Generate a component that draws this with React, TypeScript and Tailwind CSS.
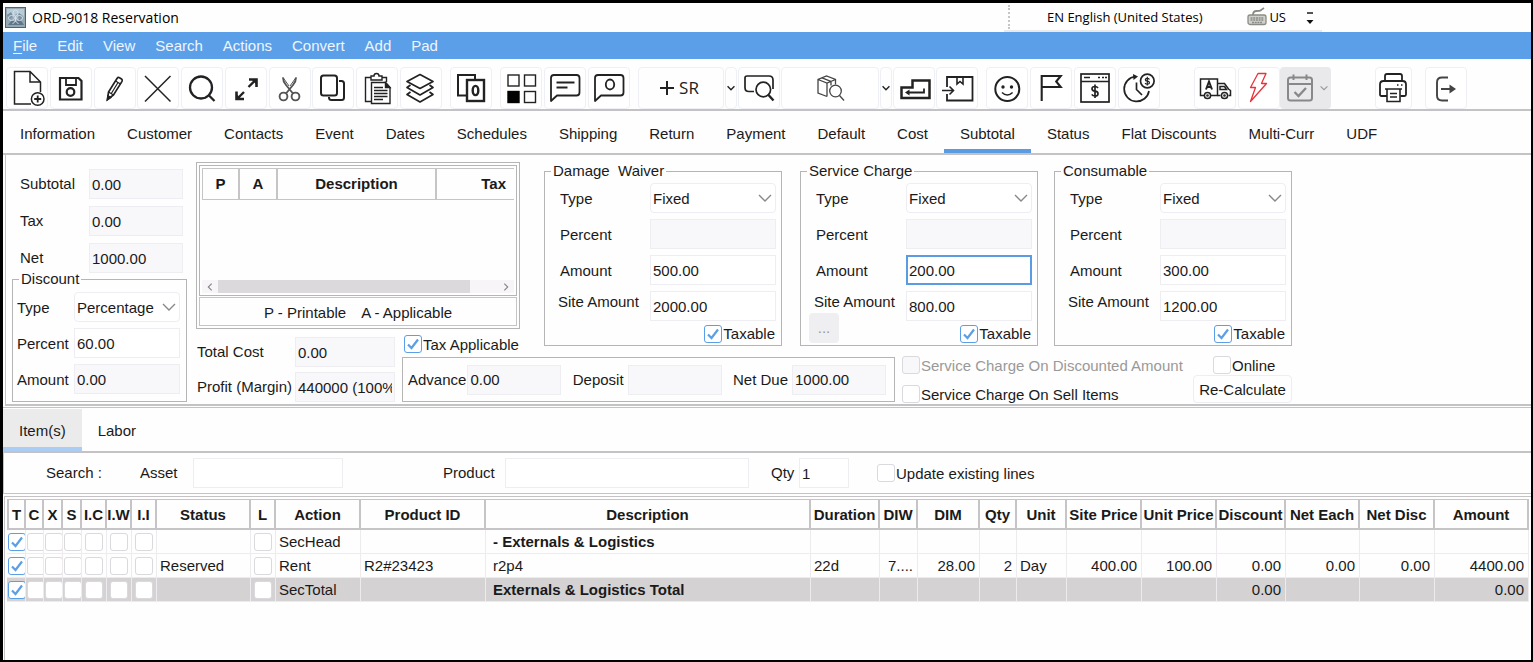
import { useState } from "react";
import type { ReactNode } from "react";

const menuItems = ["Edit", "View", "Search", "Actions", "Convert", "Add", "Pad"];

const mainTabs = [
    "Information", "Customer", "Contacts", "Event", "Dates", "Schedules", "Shipping", "Return",
    "Payment", "Default", "Cost", "Subtotal", "Status", "Flat Discounts", "Multi-Curr", "UDF",
];

interface Column {
    label: string;
    width?: number;
    align?: "left" | "right";
}

// The description column has no width and takes what is left
const columns: Column[] = [
    { label: "Status", width: 94 },
    { label: "L", width: 25 },
    { label: "Action", width: 85 },
    { label: "Product ID", width: 125 },
    { label: "Description" },
    { label: "Duration", width: 69 },
    { label: "DIW", width: 38, align: "right" },
    { label: "DIM", width: 62, align: "right" },
    { label: "Qty", width: 37, align: "right" },
    { label: "Unit", width: 50 },
    { label: "Site Price", width: 75, align: "right" },
    { label: "Unit Price", width: 75, align: "right" },
    { label: "Discount", width: 69, align: "right" },
    { label: "Net Each", width: 74, align: "right" },
    { label: "Net Disc", width: 75, align: "right" },
    { label: "Amount", width: 94, align: "right" },
];

const flagColumns = [
    { label: "T", width: 19 },
    { label: "C", width: 18 },
    { label: "X", width: 19 },
    { label: "S", width: 19 },
    { label: "I.C", width: 25 },
    { label: "I.W", width: 25 },
    { label: "I.I", width: 25 },
];

const rows = [
    { kind: "head", cells: { Action: "SecHead", Description: "- Externals & Logistics" } },
    {
        kind: "item",
        cells: {
            Status: "Reserved", Action: "Rent", "Product ID": "R2#23423", Description: "r2p4", Duration: "22d",
            DIW: "7....", DIM: "28.00", Qty: "2", Unit: "Day", "Site Price": "400.00", "Unit Price": "100.00",
            Discount: "0.00", "Net Each": "0.00", "Net Disc": "0.00", Amount: "4400.00",
        },
    },
    { kind: "total", cells: { Action: "SecTotal", Description: "Externals & Logistics Total", Discount: "0.00", Amount: "0.00" } },
] as { kind: string; cells: Record<string, string> }[];

/* ---------- icons ---------- */

function Icon({ children, stroke = 1.5, className = "text-[#222]" }: { children: ReactNode; stroke?: number; className?: string }) {
    return (
        <svg width="42" height="42" viewBox="0 0 42 42" fill="none" stroke="currentColor" strokeWidth={stroke} className={`shrink-0 ${className}`} aria-hidden="true">
            {children}
        </svg>
    );
}

const NewIcon = () => (
    <Icon>
        <path d="M25 37H8.5V4.5H24L34.5 15V25M24 4.5V15H34.5" />
        <circle cx="31.7" cy="32" r="6.3" />
        <path d="M31.7 28.5v7M28.2 32h7" strokeWidth={1.8} />
    </Icon>
);

const SaveIcon = () => (
    <Icon stroke={2.2}>
        <path d="M10 11h18.5l3 3v18.5H10z" />
        <path d="M16 11v7h10v-7" strokeWidth={1.8} />
        <circle cx="20.5" cy="25" r="3.8" />
    </Icon>
);

const PencilIcon = () => (
    <Icon stroke={1.7}>
        <path d="M13.5 32.5l1-7.5L23 11.500q1-1.500 2.500-.8l2 1.200q1.300 1 .5 2.500L19.500 28z" />
        <path d="M14.500 25l5 3M21.500 14l5.500 3.200M24 15.500L17 27" strokeWidth={1.2} />
        <path d="M13.500 32.500l.5-3.500 2.500 1.500z" fill="currentColor" />
    </Icon>
);

const CrossIcon = () => (
    <Icon>
        <path d="M8 9l25.500 25.500M33.500 9L8 34.500" />
    </Icon>
);

const SearchIcon = () => (
    <Icon stroke={2.3}>
        <circle cx="20" cy="20.5" r="11" />
        <path d="M28 28.5l5.500 5.500" />
    </Icon>
);

const ExpandIcon = () => (
    <Icon stroke={2.4}>
        <path d="M23.500 20l7-7M19 25l-7 7" />
        <path d="M24 12.500h7.500V20M11.500 24.500V32H19" strokeWidth={2.6} />
        <path d="M26.500 12.500h5V17.500zM11.500 27v5h5z" fill="currentColor" stroke="none" />
    </Icon>
);

const ScissorsIcon = () => (
    <Icon stroke={1.9} className="text-[#555]">
        <circle cx="14.5" cy="29.5" r="3.900" />
        <circle cx="26.5" cy="29.5" r="3.900" />
        <path d="M14 10.500q0 4 3 7.500l7 8.500M27 10.500q0 4-3 7.500l-7 8.500" />
        <path d="M14 10.500l6 8.500M27 10.500l-6 8.500" strokeWidth={1} />
    </Icon>
);

const CopyIcon = () => (
    <Icon stroke={2}>
        <path d="M27 14h2.500q2.500 0 2.500 2.500v14q0 2.500-2.500 2.500H19.500q-2.500 0-2.500-2.500V30" />
        <rect x="9" y="8.5" width="16" height="20" rx="2.5" />
    </Icon>
);

const PasteIcon = () => (
    <Icon stroke={1.4}>
        <path d="M15 34.500H9.500V10.500H15M26 10.500h4.500V15" />
        <path d="M15 9h3q0-2.500 2.500-2.500T23 9h3v4H15z" />
        <path d="M15.500 15.500h14l4.500 5v16H15.500z" />
        <path d="M29.500 15.500v5H34z" fill="currentColor" />
        <path d="M18 20.500h9M18 23.500h13.500M18 26.500h13.500M18 29.500h13.500M18 32.500h9" />
    </Icon>
);

const LayersIcon = () => (
    <Icon stroke={1.7}>
        <path d="M20 7.500l13 7-13 7-13-7z" strokeLinejoin="round" />
        <path d="M10.500 18L7 20.500l13 7.500 13-7.500-3.500-2.500" strokeLinejoin="round" />
        <path d="M10.500 25L7 27.500l13 7.500 13-7.500-3.500-2.500" strokeLinejoin="round" />
    </Icon>
);

const CopyZeroIcon = () => (
    <Icon stroke={2.4}>
        <path d="M16 28.500H8V8h17v4" strokeWidth={2} />
        <rect x="17" y="13" width="17" height="21" />
        <ellipse cx="25.5" cy="23.5" rx="2.8" ry="4.6" />
    </Icon>
);

const SquaresIcon = () => (
    <Icon stroke={1.4}>
        <rect x="8" y="8" width="11" height="11" />
        <rect x="24.5" y="8" width="11" height="11" />
        <rect x="8" y="24.5" width="11" height="11" fill="currentColor" className="text-black" />
        <rect x="24.5" y="24.5" width="11" height="11" />
    </Icon>
);

const BUBBLE = "M10 8h22.500q3 0 3 3v14.500q0 3-3 3H13L7 34V11q0-3 3-3z";

const MessageIcon = () => (
    <Icon stroke={1.8}>
        <path d={BUBBLE} strokeLinejoin="round" />
        <path d="M12.500 15.500h18M12.500 20.500h11" />
    </Icon>
);

const MessageZeroIcon = () => (
    <Icon stroke={1.8}>
        <path d={BUBBLE} strokeLinejoin="round" />
        <ellipse cx="22" cy="17.5" rx="4.2" ry="5" />
    </Icon>
);

const ScreenSearchIcon = () => (
    <Icon stroke={1.7}>
        <path d="M16 24.500H11q-4 0-4-4V11q0-2 2-2h22q4 0 4 4v9" />
        <circle cx="25.3" cy="22.5" r="7.3" />
        <path d="M30.500 28l5 5.500" strokeWidth={2.4} />
    </Icon>
);

const BoxSearchIcon = () => (
    <Icon stroke={1.3} className="text-[#444]">
        <path d="M18 29.500l-9-3.500V12.500l8.500-3.500 9 3.500v5M9 12.500l9 3.500 8.500-3.500M18 16v13.500M13 10.800l9 3.700v4" />
        <circle cx="26.5" cy="24" r="5.800" />
        <path d="M30.500 28.500l4.500 5" />
    </Icon>
);

const ReturnIcon = () => (
    <Icon stroke={2.5}>
        <path d="M8.500 31V20.500h11V13.500h17V31z" />
        <path d="M31 21.500v4H14" strokeWidth={1.800} />
        <path d="M16.500 22.500v6l-4.500-3z" fill="currentColor" stroke="none" />
    </Icon>
);

const ImportBoxIcon = () => (
    <Icon stroke={1.8}>
        <path d="M11 20V10h25.500v23.500H11V27" />
        <path d="M21 10v7l3-2.500 3 2.500v-7" strokeWidth={1.6} />
        <path d="M6 23.500h11M13.500 19.500l4 4-4 4" strokeWidth={1.6} />
    </Icon>
);

const SmileyIcon = () => (
    <Icon stroke={2}>
        <circle cx="21.3" cy="22" r="12" />
        <circle cx="17" cy="20" r="1.700" fill="currentColor" stroke="none" />
        <circle cx="25.5" cy="20" r="1.700" fill="currentColor" stroke="none" />
        <path d="M16 25.500q5.300 5 10.600 0" strokeWidth={1.6} />
    </Icon>
);

const FlagIcon = () => (
    <Icon stroke={2.1}>
        <path d="M11.700 34V9h19l-4.500 5.500 4.500 5.500h-19" />
    </Icon>
);

const BrowserIcon = () => (
    <Icon stroke={1.7}>
        <rect x="7" y="7" width="28" height="28" />
        <path d="M7 14.500h28" />
        <path d="M10 10.500h6M24 10.500h2M28 10.500h2M31 10.500h2" />
        <path d="M24 21q-1-1.500-3-1.500-3 0-3 2.200t3 2.400 3 2.600-3 2.300q-2.300 0-3.200-1.700M21 17.500v13.500" />
    </Icon>
);

const ClockIcon = () => (
    <Icon stroke={1.7}>
        <path d="M17.500 9.500A12.500 12.500 0 1 0 31 24" />
        <path d="M15 7l5 2.500-4.500 3.500z" fill="currentColor" stroke="none" />
        <path d="M18.500 15.500v7l5.500 5.500" />
        <circle cx="29.3" cy="14" r="6.800" />
        <path d="M31.500 12.500q-.8-1.200-2.200-1.200-2 0-2 1.400t2 1.400 2.100 1.500-2.100 1.500q-1.600 0-2.200-1.200M29.300 9.800v8.600" strokeWidth={1.2} />
    </Icon>
);

const TruckIcon = () => (
    <Icon stroke={1.5}>
        <path d="M10 28.500H6.500V12h17v16.500H17" />
        <path d="M23.500 16.500h7l4 5.500 2 1.500v5h-2M26.500 28.500h-3M26 19.500h4.500l2 3H26z" />
        <circle cx="13.5" cy="28.5" r="3.100" />
        <circle cx="30.5" cy="28.5" r="3.100" />
        <circle cx="13.5" cy="28.5" r=".6" />
        <circle cx="30.5" cy="28.5" r=".6" />
        <path d="M12 22.500l3-8 3 8M13 20h4" strokeWidth={2} />
    </Icon>
);

const BoltIcon = () => (
    <Icon stroke={1.3} className="text-[#e8343c]">
        <path d="M20 6.500h8l-4.500 10h5L12.500 34.500l5-14h-5z" strokeLinejoin="round" />
    </Icon>
);

const CalendarIcon = () => (
    <Icon stroke={2} className="text-[#888]">
        <rect x="8" y="10.5" width="24" height="23" rx="2.5" />
        <path d="M8 17h24M13.500 7.500v5.500M26.500 7.500v5.500" />
        <path d="M14.500 25l4 4 7.500-8" strokeWidth={2.3} />
    </Icon>
);

const PrinterIcon = () => (
    <Icon stroke={1.8}>
        <path d="M12 14V9q0-2 2-2h13q2 0 2 2v5" />
        <path d="M14 29H8.500Q7 29 7 27.500v-10Q7 14 10.500 14h19q3.500 0 3.500 3.500v10q0 1.500-1.500 1.500H27.500" />
        <path d="M12 22h17M14 22v12.500h13V22M17 26.500h7M17 30h7M24 18h1.500M28 18h1.500" strokeWidth={1.6} />
    </Icon>
);

const ExitIcon = () => (
    <Icon stroke={1.9} className="text-[#444]">
        <path d="M23 10.500h-6q-5 0-5 5v13q0 5 5 5h6M16 22h10" />
        <path d="M24.500 17.500l6.500 4.500-6.500 4.500z" fill="currentColor" stroke="none" />
    </Icon>
);

const Chevron = ({ size = 14, stroke = 1.4, className = "" }: { size?: number; stroke?: number; className?: string }) => (
    <svg width={size} height={size} viewBox="0 0 14 14" fill="none" stroke="currentColor" strokeWidth={stroke} className={className} aria-hidden="true">
        <path d="M1 4l6 6 6-6" />
    </svg>
);

/* ---------- controls ---------- */

function ToolButton({ label, children, width = "w-[42px]" }: { label: string; children: ReactNode; width?: string }) {
    return (
        <button aria-label={label} className={`h-[42px] ${width} shrink-0 flex items-center justify-center rounded border border-[#eef0f5] bg-white overflow-hidden hover:bg-[#f1f6fd]`}>
            {children}
        </button>
    );
}

function DropButton({ label }: { label: string }) {
    return (
        <button aria-label={label} className="h-[42px] w-3 shrink-0 flex items-center justify-center rounded border border-[#eef0f5] text-[#222]">
            <Chevron size={8} stroke={2.4} className="shrink-0" />
        </button>
    );
}

function CheckBox({ id, label, checked = false, disabled = false }: { id?: string; label?: string; checked?: boolean; disabled?: boolean }) {
    return (
        <span className="relative block size-[18px] shrink-0">
            <input
                type="checkbox"
                id={id}
                aria-label={label}
                defaultChecked={checked}
                disabled={disabled}
                className="peer block size-[18px] appearance-none rounded-[3px] border border-[#d9d9de] bg-white checked:border-[#5b9fe6] disabled:bg-[#f8f7fa]"
            />
            <svg width="18" height="18" viewBox="0 0 18 18" fill="none" stroke="#5b9fe6" strokeWidth="2.2" className="absolute inset-0 hidden peer-checked:block pointer-events-none">
                <path d="M4 9.500l3.500 3.500L14 4.500" />
            </svg>
        </span>
    );
}

function TextBox({ id, value = "", width = "w-[126px]", readOnly = false, active = false }: { id: string; value?: string; width?: string; readOnly?: boolean; active?: boolean }) {
    return (
        <input
            id={id}
            type="text"
            defaultValue={value}
            readOnly={readOnly}
            className={`h-[30px] shrink-0 outline-none ${width} ${active ? "border-2 border-[#5b9be2] px-px" : "border border-[#eeedf2] px-0.5"} ${readOnly ? "bg-[#f8f7fa]" : "bg-white"}`}
        />
    );
}

function SelectBox({ id, value, width = "w-[126px]" }: { id: string; value: string; width?: string }) {
    return (
        <span className={`relative shrink-0 ${width}`}>
            <select id={id} defaultValue={value} className="block h-[30px] w-full appearance-none rounded border border-[#eeedf2] bg-white pt-px pl-0.5 outline-none">
                <option>Fixed</option>
                <option>Percentage</option>
            </select>
            <Chevron className="absolute right-1 top-2 text-[#888] pointer-events-none" />
        </span>
    );
}

interface ChargeGroupProps {
    id: string;
    title: string;
    amount: string;
    siteAmount: string;
    active?: boolean;
    more?: boolean;
    className: string;
}

function ChargeGroup({ id, title, amount, siteAmount, active, more, className }: ChargeGroupProps) {
    return (
        <fieldset className={`w-[238px] self-start border border-[#b5b5b5] pt-[3px] pb-0.5 pr-[5px] pl-2 ${className}`}>
            <legend className="-ml-0.5 px-0.5 leading-[18px] whitespace-pre">{title}</legend>
            <div className="flex flex-col gap-1.5">
                <div className="flex items-center justify-between pl-[7px]">
                    <label htmlFor={`${id}-type`} className="pt-0.5">Type</label>
                    <SelectBox id={`${id}-type`} value="Fixed" />
                </div>
                <div className="flex items-center justify-between pl-[7px]">
                    <label htmlFor={`${id}-percent`} className="pt-0.5">Percent</label>
                    <TextBox id={`${id}-percent`} readOnly />
                </div>
                <div className="flex items-center justify-between pl-[7px]">
                    <label htmlFor={`${id}-amount`} className="pt-0.5">Amount</label>
                    <TextBox id={`${id}-amount`} value={amount} active={active} />
                </div>
                <div className="flex items-start justify-between pl-[5px]">
                    <label htmlFor={`${id}-site`} className="pt-0.5">Site Amount</label>
                    <TextBox id={`${id}-site`} value={siteAmount} />
                </div>
            </div>
            <div className="mt-0.5 flex h-5 items-end">
                {more && <button className="size-[30px] rounded-sm bg-[#efeef1] text-[#999]">...</button>}
                <div className="ml-auto flex items-center">
                    <CheckBox id={`${id}-taxable`} checked />
                    <label htmlFor={`${id}-taxable`} className="pl-px pr-px">Taxable</label>
                </div>
            </div>
        </fieldset>
    );
}

/* ---------- page sections ---------- */

function TitleBar() {
    return (
        <header className="flex h-[29px] items-center pl-0.5 text-black">
            <svg width="21" height="21" viewBox="0 0 21 21" className="shrink-0" aria-hidden="true">
                <rect x=".5" y=".5" width="20" height="20" fill="#93a7b5" stroke="#5a6066" />
                <path d="M2 2h17v8l-6-4-5 3-6-2z" fill="#b9cbd6" />
                <path d="M3 18l4-5 3 2 5-3 4 6z" fill="#5f7687" />
                <path d="M2 8l4-3 2 4-4 4zM14 6l4 3-2 4-3-3z" fill="#7990a0" />
                <g fill="none" stroke="#d3e0e8">
                    <ellipse cx="10.5" cy="6" rx="2.500" ry="3" />
                    <ellipse cx="6.5" cy="11" rx="3" ry="2.500" />
                    <ellipse cx="14.5" cy="11" rx="3" ry="2.500" />
                    <path d="M10.500 9v5l-3 3M10.500 14l3 3" />
                </g>
            </svg>
            <h1 className="pl-1.5 font-['Open_Sans',sans-serif] text-[14px]">ORD-9018 Reservation</h1>
            <div className="ml-auto mr-[209px] flex h-full w-[318px] items-center border-b-2 border-[#e9e9e7] font-['Open_Sans',sans-serif] text-[13px]">
                <span className="ml-1 h-6 border-l-2 border-dotted border-[#c6c6c6]" />
                <span className="ml-[37px]">EN English (United States)</span>
                <svg width="20" height="19" viewBox="0 0 20 19" fill="none" stroke="#8b8b86" className="ml-auto" aria-hidden="true">
                    <rect x="1" y="8" width="18" height="9.5" rx="2" fill="#d0d0cc" strokeWidth="1.3" />
                    <path d="M3.500 11h13M3.500 13h13M5 15.500h10" strokeDasharray="2 .7" strokeWidth="1.3" />
                    <path d="M6 8q0-4 3.500-4t4-.5T17 1" strokeWidth="1.8" />
                </svg>
                <span className="pl-0.5">US</span>
                <button aria-label="Language bar options" className="ml-5 mr-2">
                    <svg width="8" height="16" viewBox="0 0 8 16" aria-hidden="true">
                        <path d="M1 3h6v2H1z" fill="#555" />
                        <path d="M.5 11h7L4 15z" fill="#111" />
                    </svg>
                </button>
            </div>
        </header>
    );
}

function Toolbar() {
    return (
        <div role="toolbar" className="flex h-[52px] items-end border-b-2 border-[#c4c2c4] pl-[3px]">
            <div className="flex w-[436px] shrink-0 justify-between">
                <ToolButton label="New"><NewIcon /></ToolButton>
                <ToolButton label="Save"><SaveIcon /></ToolButton>
                <ToolButton label="Edit"><PencilIcon /></ToolButton>
                <ToolButton label="Delete"><CrossIcon /></ToolButton>
                <ToolButton label="Search"><SearchIcon /></ToolButton>
                <ToolButton label="Expand"><ExpandIcon /></ToolButton>
                <ToolButton label="Cut"><ScissorsIcon /></ToolButton>
                <ToolButton label="Copy"><CopyIcon /></ToolButton>
                <ToolButton label="Paste"><PasteIcon /></ToolButton>
                <ToolButton label="Layers"><LayersIcon /></ToolButton>
            </div>
            <div className="ml-2 flex">
                <ToolButton label="Copy count"><CopyZeroIcon /></ToolButton>
            </div>
            <div className="ml-2 flex gap-0.5">
                <ToolButton label="Grid"><SquaresIcon /></ToolButton>
                <ToolButton label="Notes"><MessageIcon /></ToolButton>
                <ToolButton label="Note count"><MessageZeroIcon /></ToolButton>
            </div>
            <div className="ml-2 flex gap-px">
                <button className="flex h-[42px] w-[86px] items-center justify-center rounded border border-[#eef0f5] pr-1 font-['Open_Sans',sans-serif] text-[17px] text-[#222]">
                    <svg width="16" height="16" viewBox="0 0 16 16" stroke="currentColor" strokeWidth="2" className="mr-1" aria-hidden="true">
                        <path d="M8 1v14M1 8h14" />
                    </svg>
                    SR
                </button>
                <DropButton label="SR options" />
                <ToolButton label="Find on screen"><ScreenSearchIcon /></ToolButton>
            </div>
            <div className="ml-px flex gap-px">
                <ToolButton label="Find product" width="w-[98px]"><BoxSearchIcon /></ToolButton>
                <DropButton label="Find product options" />
                <ToolButton label="Return"><ReturnIcon /></ToolButton>
                <ToolButton label="Check in"><ImportBoxIcon /></ToolButton>
            </div>
            <div className="ml-2 flex gap-0.5">
                <ToolButton label="Customer"><SmileyIcon /></ToolButton>
                <ToolButton label="Flag"><FlagIcon /></ToolButton>
                <ToolButton label="Pricing"><BrowserIcon /></ToolButton>
                <ToolButton label="Billing time"><ClockIcon /></ToolButton>
            </div>
            <div className="ml-[34px] flex">
                <div className="flex gap-0.5">
                    <ToolButton label="Delivery"><TruckIcon /></ToolButton>
                    <ToolButton label="Quick action"><BoltIcon /></ToolButton>
                </div>
                <button aria-label="Confirm dates" className="flex h-[42px] w-[51px] items-center overflow-hidden rounded bg-[#e9e8eb] text-[#999]">
                    <CalendarIcon />
                    <Chevron size={8} stroke={2} className="-ml-0.5 shrink-0" />
                </button>
            </div>
            <div className="ml-11 flex gap-[13px]">
                <ToolButton label="Print" width="w-[37px]"><PrinterIcon /></ToolButton>
                <ToolButton label="Exit"><ExitIcon /></ToolButton>
            </div>
        </div>
    );
}

function TaxTable() {
    return (
        <div className="col-span-2 h-[167px] w-[324px] border border-[#b5b5b5] p-0.5">
            <div className="flex h-[131px] flex-col border border-[#b5b5b5] p-0.5">
                <table className="w-full table-fixed border-separate border-spacing-0">
                    <thead>
                        <tr className="h-[32px]">
                            <th className="w-[38px] border-y border-l border-r-2 border-[#c6c4c6]">P</th>
                            <th className="w-[38px] border-y border-r-2 border-[#c6c4c6]">A</th>
                            <th className="w-[159px] border-y border-r-2 border-[#c6c4c6]">Description</th>
                            <th className="border-y border-[#c6c4c6] pr-2 text-right">Tax</th>
                        </tr>
                    </thead>
                </table>
                <div className="mt-auto flex h-[13px] items-center bg-[#f7f5f7] text-[#888]">
                    <Chevron size={8} stroke={2} className="mx-1 shrink-0 rotate-90" />
                    <div className="h-full w-[252px] bg-[#dbd9db]" />
                    <Chevron size={8} stroke={2} className="ml-auto mr-1 shrink-0 -rotate-90" />
                </div>
            </div>
            <div className="mt-px flex h-[29px] items-center justify-center gap-[15px] border border-[#c6c4c6] pt-0.5">
                <span>P - Printable</span>
                <span>A - Applicable</span>
            </div>
        </div>
    );
}

function SubtotalPanel() {
    return (
        <section className="ml-0.5 flex h-[251px] border-b-2 border-l border-[#c4c2c4]">
            <div className="ml-1.5 mr-[9px] w-[175px] shrink-0">
                <div className="mt-[14px] flex flex-col gap-[7px] pr-1">
                    <div className="flex items-center justify-between pl-2">
                        <label htmlFor="subtotal">Subtotal</label>
                        <TextBox id="subtotal" value="0.00" width="w-[94px]" readOnly />
                    </div>
                    <div className="flex items-center justify-between pl-2">
                        <label htmlFor="tax">Tax</label>
                        <TextBox id="tax" value="0.00" width="w-[94px]" readOnly />
                    </div>
                    <div className="flex items-center justify-between pl-2">
                        <label htmlFor="net">Net</label>
                        <TextBox id="net" value="1000.00" width="w-[94px]" readOnly />
                    </div>
                </div>
                <fieldset className="-mt-[3px] border border-[#b5b5b5] pt-1 pb-[7px] pl-1 pr-1.5">
                    <legend className="ml-0.5 px-0.5 leading-[18px]">Discount</legend>
                    <div className="flex flex-col gap-1.5">
                        <div className="flex items-center justify-between">
                            <label htmlFor="discount-type" className="pt-0.5">Type</label>
                            <SelectBox id="discount-type" value="Percentage" width="w-[106px]" />
                        </div>
                        <div className="flex items-center justify-between">
                            <label htmlFor="discount-percent" className="pt-0.5">Percent</label>
                            <TextBox id="discount-percent" value="60.00" width="w-[106px]" />
                        </div>
                        <div className="flex items-center justify-between">
                            <label htmlFor="discount-amount" className="pt-0.5">Amount</label>
                            <TextBox id="discount-amount" value="0.00" width="w-[106px]" readOnly />
                        </div>
                    </div>
                </fieldset>
            </div>

            <div className="mt-[7px] grid grid-cols-[206px_142px_256px_102px_152px_238px] grid-rows-[171px_22px_48px]">
                <TaxTable />
                <ChargeGroup id="waiver" title="Damage  Waiver" amount="500.00" siteAmount="2000.00" className="row-span-2" />
                <ChargeGroup id="service" title="Service Charge" amount="200.00" siteAmount="800.00" active more className="col-span-2 row-span-2" />
                <ChargeGroup id="consumable" title="Consumable" amount="300.00" siteAmount="1200.00" className="row-span-2" />

                <div className="row-span-2 mr-[7px] flex flex-col gap-[5px] pt-1">
                    <div className="flex items-center justify-between pl-px">
                        <label htmlFor="total-cost">Total Cost</label>
                        <TextBox id="total-cost" value="0.00" width="w-[100px]" readOnly />
                    </div>
                    <div className="flex items-center justify-between pl-px">
                        <label htmlFor="profit">Profit (Margin)</label>
                        <TextBox id="profit" value="440000 (100%)" width="w-[100px]" readOnly />
                    </div>
                </div>
                <div className="flex items-center pl-0.5">
                    <CheckBox id="tax-applicable" checked />
                    <label htmlFor="tax-applicable" className="pt-0.5 pl-px whitespace-nowrap">Tax Applicable</label>
                </div>

                <div className="col-span-3 col-start-2 mr-[7px] mt-0.5 flex h-[45px] items-center justify-between border border-[#b5b5b5] pl-[5px] pr-2">
                    <div className="flex items-center gap-px">
                        <label htmlFor="advance">Advance</label>
                        <TextBox id="advance" value="0.00" width="w-[94px]" readOnly />
                    </div>
                    <div className="flex items-center gap-1">
                        <label htmlFor="deposit">Deposit</label>
                        <TextBox id="deposit" width="w-[94px]" readOnly />
                    </div>
                    <div className="flex items-center gap-1">
                        <label htmlFor="net-due">Net Due</label>
                        <TextBox id="net-due" value="1000.00" width="w-[94px]" readOnly />
                    </div>
                </div>
                <div className="col-span-2 flex justify-between">
                    <div className="flex flex-col gap-[9px]">
                        <div className="flex items-center">
                            <CheckBox id="on-discounted" disabled />
                            <label htmlFor="on-discounted" className="pt-0.5 pl-px text-[#999]">Service Charge On Discounted Amount</label>
                        </div>
                        <div className="flex items-center">
                            <CheckBox id="on-sell" />
                            <label htmlFor="on-sell" className="pt-0.5 pl-px">Service Charge On Sell Items</label>
                        </div>
                    </div>
                    <div className="w-[99px]">
                        <div className="flex items-center pl-5">
                            <CheckBox id="online" />
                            <label htmlFor="online" className="pt-0.5 pl-px">Online</label>
                        </div>
                        <button className="h-[28px] w-full rounded border border-[#eeedf2] pt-px whitespace-nowrap">Re-Calculate</button>
                    </div>
                </div>
            </div>
        </section>
    );
}

function ItemsTable() {
    return (
        <div className="ml-px mt-0.5 flex-1 border-l border-t border-[#c4c2c4] pl-0.5 pr-0.5 pt-0.5">
            <table className="w-full table-fixed border-separate border-spacing-0">
                <colgroup>
                    {[...flagColumns, ...columns].map((c) => (
                        <col key={c.label} style={{ width: c.width }} />
                    ))}
                </colgroup>
                <thead>
                    <tr className="h-[31px]">
                        {[...flagColumns, ...columns].map((c) => (
                            <th key={c.label} className="whitespace-nowrap border-b-2 border-r-2 border-t border-[#c6c4c6] p-0 pt-px first:border-l-2">
                                <div className="flex justify-center">{c.label}</div>
                            </th>
                        ))}
                    </tr>
                </thead>
                <tbody>
                    {rows.map((row) => (
                        <tr key={row.kind} className={`h-6 ${row.kind === "total" ? "bg-[#d4d2d3]" : ""}`}>
                            {flagColumns.map((c) => (
                                <td key={c.label} className="border-b border-r border-[#edebed] p-0">
                                    <div className={`flex overflow-hidden ${c.width > 20 ? "justify-center" : "pl-px"}`}>
                                        <CheckBox label={`${c.label} ${row.kind}`} checked={c.label === "T"} />
                                    </div>
                                </td>
                            ))}
                            {columns.map((c) => (
                                <td
                                    key={c.label}
                                    className={`overflow-hidden whitespace-nowrap border-b border-r border-[#edebed] p-0 ${c.align === "right" ? "pr-1 text-right" : c.label === "Description" ? "pl-[7px]" : "pl-[3px]"} ${c.label === "Description" && row.kind !== "item" ? "font-bold" : ""}`}
                                >
                                    {c.label === "L" ? <CheckBox label={`L ${row.kind}`} /> : <div className="pt-px">{row.cells[c.label]}</div>}
                                </td>
                            ))}
                        </tr>
                    ))}
                </tbody>
            </table>
        </div>
    );
}

export default function App() {
    const [tab, setTab] = useState("Subtotal");
    const [listTab, setListTab] = useState("Item(s)");

    return (
        <div className="flex min-h-screen flex-col overflow-hidden border-t-3 border-l-3 border-r-2 border-b-2 border-black bg-[#fefefe] font-['Liberation_Sans',Arial,sans-serif] text-[15px] leading-[18px] text-[#1a1a1a]">
            <TitleBar />

            <nav className="flex h-[27px] items-center gap-5 bg-[#5b9fe9] pl-2.5 pt-px text-[#eef5fd]">
                <button><span className="underline underline-offset-2">F</span>ile</button>
                {menuItems.map((m) => (
                    <button key={m}>{m}</button>
                ))}
            </nav>

            <Toolbar />

            <div className="flex h-[44px] border-b-2 border-[#c4c2c4] pl-px">
                {mainTabs.map((t) => (
                    <button
                        key={t}
                        onClick={() => setTab(t)}
                        className={`shrink-0 border-b-4 px-4 pt-2 ${tab === t ? "border-[#5b9be2]" : "border-transparent"}`}
                    >
                        {t}
                    </button>
                ))}
            </div>

            <SubtotalPanel />

            <div className="mt-px flex h-[46px] border-b-2 border-t border-[#c4c2c4] pt-px">
                {["Item(s)", "Labor"].map((t) => (
                    <button
                        key={t}
                        onClick={() => setListTab(t)}
                        className={`border-b-4 px-4 pt-1.5 ${listTab === t ? "border-[#a9cdf5] bg-[#ecebec]" : "border-transparent"}`}
                    >
                        {t}
                    </button>
                ))}
            </div>

            <div className="flex h-[41px] items-center border-b border-l border-[#c4c2c4]">
                <span className="ml-[42px] w-[94px]">Search :</span>
                <label htmlFor="asset" className="w-[53px]">Asset</label>
                <TextBox id="asset" width="w-[150px]" />
                <label htmlFor="product" className="ml-[100px] w-[62px]">Product</label>
                <TextBox id="product" width="w-[244px]" />
                <label htmlFor="qty" className="ml-[22px] w-7">Qty</label>
                <TextBox id="qty" value="1" width="w-[50px]" />
                <div className="ml-7 flex items-center">
                    <CheckBox id="update-lines" />
                    <label htmlFor="update-lines" className="pt-0.5 pl-px">Update existing lines</label>
                </div>
            </div>

            <ItemsTable />
        </div>
    );
}
